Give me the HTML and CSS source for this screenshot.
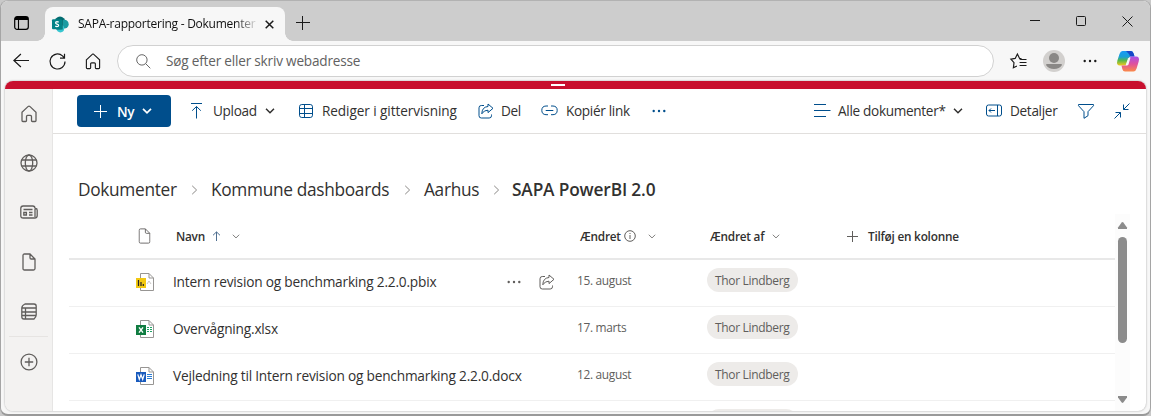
FILE: index.html
```html
<!DOCTYPE html>
<html lang="da">
<head>
<meta charset="utf-8">
<title>SAPA-rapportering - Dokumenter</title>
<link rel="stylesheet" href="styles.css">
</head>
<body>
<svg class="defs" aria-hidden="true">
  <defs>
    <symbol id="home" viewBox="0 0 16 18"><path d="M1 7.2 7.2 1.4Q8 .8 8.8 1.4L15 7.2V15.6Q15 16.5 14.1 16.5H11.3Q10.5 16.5 10.5 15.6V11.5Q10.5 10.4 9.4 10.4H6.6Q5.5 10.4 5.5 11.5V15.6Q5.5 16.5 4.7 16.5H1.9Q1 16.5 1 15.6Z"/></symbol>
    <symbol id="chev" viewBox="0 0 10 6"><path d="M1 .8 5 4.8 9 .8"/></symbol>
    <symbol id="chevr" viewBox="0 0 7 10"><path d="M1.2 .8 5.6 5 1.2 9.2"/></symbol>
    <symbol id="page" viewBox="0 0 14 18"><path d="M2.5 1H8L13 6V15.5Q13 17 11.5 17H2.5Q1 17 1 15.5V2.5Q1 1 2.5 1ZM8 1V4.8Q8 6 9.2 6H13"/></symbol>
    <symbol id="share" viewBox="0 0 16 16"><path d="M6 2.5H3.3Q1 2.5 1 4.8V12.7Q1 15 3.3 15H11.2Q13.5 15 13.5 12.7V11.5"/><path d="M10 1 15 5.3 10 9.6V7.2Q6 7 3.8 10.8 4 4 10 3.5Z"/></symbol>
    <symbol id="dots" viewBox="0 0 14 4"><circle cx="1.7" cy="2" r="1.2"/><circle cx="7" cy="2" r="1.2"/><circle cx="12.3" cy="2" r="1.2"/></symbol>
    <symbol id="sheet" viewBox="0 0 18 18"><path class="sheet" d="M4.5.5H13L17.500 5V17.500H4.500ZM13 .5V5H17.500"/></symbol>
    <linearGradient id="cpA" x1="0" y1="0" x2="0" y2="1"><stop offset="0" stop-color="#1a9af5"/><stop offset=".4" stop-color="#18a0d8"/><stop offset=".65" stop-color="#58b84b"/><stop offset="1" stop-color="#f4c81c"/></linearGradient>
    <linearGradient id="cpB" x1="0" y1="0" x2="0" y2="1"><stop offset="0" stop-color="#a951e8"/><stop offset=".5" stop-color="#e0529c"/><stop offset="1" stop-color="#fb8a48"/></linearGradient>
  </defs>
</svg>
<div class="window">
  <header class="titlebar">
    <svg class="ic tabs-icon" width="15" height="14" viewBox="0 0 15 14"><rect x=".7" y=".7" width="13.600" height="12.600" rx="2.400" stroke-width="1.200"/><path d="M1 2.500H14" stroke-width="3"/><path d="M4.500 3V13" stroke-width="1.100"/></svg>
    <div class="tab">
      <svg width="17" height="17" viewBox="0 0 17 17"><circle cx="8" cy="6" r="5.4" fill="#036c70"/><circle cx="12.3" cy="8.2" r="4.4" fill="#1a9ba1"/><circle cx="8.4" cy="12.6" r="3.8" fill="#37c6d0"/><path d="M4 3.5H10.700V13.500H4Z" fill="#02595c" opacity=".8"/><rect y="3.2" width="10" height="10" rx="1" fill="#038387"/><path d="M6.700 6.300Q6 5.700 5 5.700 3.600 5.800 3.600 6.900 3.700 7.800 5 8.100 6.600 8.500 6.600 9.500 6.500 10.700 5 10.700 4 10.700 3.300 10.100" fill="none" stroke="#fff" stroke-width="1.300"/></svg>
      <span class="tab-title">SAPA-rapportering - Dokumenter</span>
      <svg class="ic" width="9" height="9" viewBox="0 0 9 9"><path d="M.7.7 8.3 8.3M8.3.7.7 8.3" stroke-width="1.5"/></svg>
    </div>
    <svg class="ic newtab" width="14" height="14" viewBox="0 0 14 14"><path d="M6.500 0V14M0 6.500H14" stroke-width="1"/></svg>
    <div class="controls">
      <svg class="ic" width="10" height="10" viewBox="0 0 10 10"><path d="M0 4.5H10" stroke-width="1"/></svg>
      <svg class="ic" width="10" height="10" viewBox="0 0 10 10"><rect x=".5" y=".5" width="9" height="9" rx="1"/></svg>
      <svg class="ic" width="11" height="11" viewBox="0 0 11 11"><path d="M.5.5 10.5 10.5M10.5.5.5 10.5"/></svg>
    </div>
  </header>
  <nav class="toolbar">
    <svg class="ic back" width="17" height="16" viewBox="0 0 17 16"><path d="M7.900 1 .9 7.500 7.900 14M1 7.500H16" stroke-width="1.200"/></svg>
    <svg class="ic reload" width="17" height="17" viewBox="0 0 17 17"><path d="M16 8.5A7.5 7.5 0 1 1 13.500 2.900L15.500 5M15.500 .7V5.200H11" stroke-width="1.200"/></svg>
    <svg class="ic" width="16" height="17"><use href="#home" stroke-width="1.200"/></svg>
    <div class="address">
      <svg class="ic search" width="15" height="15" viewBox="0 0 15 15"><circle cx="5.900" cy="5.900" r="5.200"/><path d="M9.600 9.600 14.300 14.300"/></svg>
      <span class="address-text">Søg efter eller skriv webadresse</span>
    </div>
    <svg class="ic fav" width="17" height="17" viewBox="0 0 17 17"><path d="M11.500 5.700 9.600 5.400 7.400 1 5.200 5.400.9 6.200 4 9.700 3.400 14.700 6.900 13M9.600 6.500H16.500M9.600 9.500H16.500M9.600 12.500H16.500" stroke-width="1.200"/></svg>
    <svg class="avatar" width="22" height="22" viewBox="0 0 22 22"><circle cx="11" cy="11" r="11" fill="#d2d0ce"/><circle cx="11" cy="8" r="5" fill="#8a8886"/><path d="M3 15Q3 14 4 14H18Q19 14 19 15A9 7.500 0 0 1 3 15Z" fill="#8a8886"/></svg>
    <svg class="more" width="14" height="4"><use href="#dots"/></svg>
    <svg class="copilot" width="22" height="21" viewBox="0 0 22 21"><path d="M5.500 0H14Q16 0 16.800 3L17.500 5.500H14Q12 5.500 11.200 8L9 14.500H3Q-1 14.500.4 9.500L2.500 3Q3.500 0 5.500 0Z" fill="url(#cpA)"/><path d="M9 0H14Q16 0 16.800 3L17.500 5.500H14.500Q12.500 5.500 12 3Z" fill="#1747c8"/><path d="M16.500 20.500H8Q6 20.500 5.300 18L4.500 14.500H8Q10 14.500 10.800 12L13 5.500H19Q23 5.500 21.700 10.500L19.600 17.500Q18.700 20.500 16.500 20.500Z" fill="url(#cpB)"/><path d="M13.500 6.500 11.500 13.500Q11 14.500 9.700 14.500H8.500L11 7.500Q11.500 6.500 13.500 6.500Z" fill="#f7f7f7"/></svg>
  </nav>
  <div class="content">
    <div class="redbar"><span class="grip"></span></div>
    <div class="app">
      <aside class="rail">
        <svg class="ric" width="16" height="18"><use href="#home"/></svg>
        <svg class="ric" width="18" height="18" viewBox="0 0 18 18"><circle cx="9" cy="9" r="8"/><ellipse cx="9" cy="9" rx="3.700" ry="8"/><path d="M1.700 6H16.300M1.700 12H16.300"/></svg>
        <svg class="ric" width="18" height="14" viewBox="0 0 18 14"><path d="M15 3.500V12M15 3.500H15.500Q17.200 3.500 17.200 5.200V10.500Q17.200 13 14.800 13H3.200Q.8 13 .8 10.700V3.300Q.8 1 3.100 1H12.700Q15 1 15 3.300M3.500 4.500H12.500M9 7.500H12.500M9 10H12.500M3.800 7.500H6.400V10H3.800Z"/></svg>
        <svg class="ric" width="14" height="18"><use href="#page"/></svg>
        <svg class="ric" width="16" height="17" viewBox="0 0 16 17"><path d="M4 1H13Q15.200 1 15.200 3.200V12Q15.200 14 13 16H3Q.8 16 .8 13.800V5Q.8 2.500 4 1ZM.8 5H15M.8 9H15M.8 12.500H15M4.500 5V16"/></svg>
        <span class="rail-line"></span>
        <svg class="ric" width="18" height="18" viewBox="0 0 18 18"><circle cx="9" cy="9" r="7.900"/><path d="M9 4.800V13.200M4.800 9H13.200"/></svg>
      </aside>
      <main class="main">
        <div class="commands">
          <div class="new"><svg width="13" height="13" viewBox="0 0 13 13"><path d="M6.500 0V13M0 6.500H13"/></svg><b class="new-label">Ny</b><svg class="bold" width="10" height="6"><use href="#chev"/></svg></div>
          <svg class="cic" width="16" height="16" viewBox="0 0 16 16"><path d="M3 .5H14M8.500 15.500V3.500M4.200 7.700 8.500 3.500 12.800 7.700"/></svg>
          <span>Upload</span>
          <svg class="cic dark" width="10" height="6"><use href="#chev"/></svg>
          <svg class="cic" width="16" height="16" viewBox="0 0 16 16"><rect x="1.500" y="1.500" width="13" height="13" rx="2.300"/><path d="M1.500 5.500H14.500M1.500 10.500H14.500M6.500 1.500V14.500"/></svg>
          <span class="t-edit">Rediger i gittervisning</span>
          <svg class="cic" width="16" height="16"><use href="#share"/></svg>
          <span>Del</span>
          <svg class="cic" width="17" height="11" viewBox="0 0 17 11"><path d="M7 1H5Q.8 1.200.8 5.300.8 9.500 5 9.700H7M10 1H12Q16.200 1.200 16.200 5.300 16.200 9.500 12 9.700H10M4.700 5.500H12.300"/></svg>
          <span>Kopiér link</span>
          <svg class="blue-fill" width="14" height="4"><use href="#dots"/></svg>
          <svg class="cic" width="17" height="14" viewBox="0 0 17 14"><path d="M0 .5H12M0 6.500H16.500M0 12.500H12"/></svg>
          <span class="t-view">Alle dokumenter*</span>
          <svg class="cic dark" width="10" height="6"><use href="#chev"/></svg>
          <svg class="cic" width="17" height="13" viewBox="0 0 17 13"><rect x=".5" y="1" width="15" height="11" rx="2"/><path d="M11.500 1V12M9 6.500H3M5 4.500 3 6.500 5 8.500"/></svg>
          <span>Detaljer</span>
          <svg class="cic" width="16" height="16" viewBox="0 0 16 16"><path d="M.5 1.500H15.500V2.700L10 8.700V12.700L6 15.300V8.700L.5 2.700Z"/></svg>
          <svg class="cic" width="16" height="16" viewBox="0 0 16 16"><path d="M15.500.5 9.500 6.500M9.500 1.500V6.500H14.500M.5 15.500 6.500 9.500M1.500 9.500H6.500V14.500"/></svg>
        </div>
        <div class="crumbs">
          <span>Dokumenter</span><svg width="7" height="10"><use href="#chevr"/></svg>
          <span>Kommune dashboards</span><svg width="7" height="10"><use href="#chevr"/></svg>
          <span>Aarhus</span><svg width="7" height="10"><use href="#chevr"/></svg>
          <span class="current">SAPA PowerBI 2.0</span>
        </div>
        <div class="listing">
          <div class="table">
            <div class="thead">
              <svg class="gic" width="13" height="16" viewBox="0 0 14 18"><use href="#page"/></svg>
              <span>Navn</span>
              <svg class="sort" width="9" height="10" viewBox="0 0 9 10"><path d="M4.500 10V1M1 4.300 4.500.9 8 4.300"/></svg>
              <svg class="gic" width="8" height="5"><use href="#chev"/></svg>
              <span>Ændret</span>
              <svg class="gic" width="12" height="12" viewBox="0 0 12 12"><circle cx="6" cy="6" r="5.300"/><path d="M6 5V9M6 3V4"/></svg>
              <svg class="gic" width="8" height="5"><use href="#chev"/></svg>
              <span>Ændret af</span>
              <svg class="gic" width="8" height="5"><use href="#chev"/></svg>
              <svg class="gic" width="11" height="11" viewBox="0 0 11 11"><path d="M5.500 0V11M0 5.500H11"/></svg>
              <span>Tilføj en kolonne</span>
            </div>
            <div class="row">
              <svg width="18" height="18" viewBox="0 0 18 18"><use href="#sheet"/><path d="M11 11 13 8 15 11" fill="none" stroke="#c8c6c4"/><rect y="5" width="10" height="10" fill="#f2c811"/><path d="M2.500 7V13M5 9V13M7.300 11V13" stroke="#252423" stroke-width="1.200"/></svg>
              <span class="name">Intern revision og benchmarking 2.2.0.pbix</span>
              <svg class="grey-fill" width="14" height="4"><use href="#dots"/></svg>
              <svg class="gic" width="16" height="16"><use href="#share"/></svg>
              <span class="date">15. august</span><span class="pill">Thor Lindberg</span>
            </div>
            <div class="row">
              <svg width="18" height="18" viewBox="0 0 18 18"><use href="#sheet"/><path d="M11 7.500H13M14 7.500H16M11 9.500H13M14 9.500H16M11 11.500H13M14 11.500H16" stroke="#21a366"/><rect y="5" width="10" height="10" fill="#107c41"/><path d="M3 7.300 7 12.700M7 7.300 3 12.700" stroke="#fff" stroke-width="1.400"/></svg>
              <span class="name">Overvågning.xlsx</span><span></span><span></span>
              <span class="date">17. marts</span><span class="pill">Thor Lindberg</span>
            </div>
            <div class="row">
              <svg width="18" height="18" viewBox="0 0 18 18"><use href="#sheet"/><path d="M11 7.500H16M11 9.500H16M11 11.500H16" stroke="#2b7cd3"/><rect y="5" width="10" height="10" fill="#185abd"/><path d="M1.800 7.300 3.300 12.300 5 7.800 6.700 12.300 8.200 7.300" fill="none" stroke="#fff" stroke-width="1.200"/></svg>
              <span class="name">Vejledning til Intern revision og benchmarking 2.2.0.docx</span><span></span><span></span>
              <span class="date">12. august</span><span class="pill">Thor Lindberg</span>
            </div>
            <div class="row"><span></span><span></span><span></span><span></span><span></span><span class="pill"></span></div>
          </div>
          <div class="scroll">
            <svg width="9" height="7" viewBox="0 0 9 7"><path d="M3.700.5Q4.500-.3 5.300.5L9 5.500V7H0V5.500Z"/></svg>
            <span class="thumb"></span>
            <svg class="down" width="9" height="7" viewBox="0 0 9 7"><path d="M3.700 6.500Q4.500 7.300 5.300 6.500L9 1.500V0H0V1.500Z"/></svg>
          </div>
        </div>
      </main>
    </div>
  </div>
</div>
</body>
</html>
```

FILE: styles.css
```css
* { box-sizing: border-box; }
body {
  margin: 0;
  width: 1151px;
  height: 416px;
  overflow: hidden;
  background: #c9c9c9;
  font-family: "Open Sans", "Noto Sans", sans-serif;
  font-size: 13.6px;
  letter-spacing: -0.32px;
  color: #323130;
}
svg { display: block; flex: none; overflow: visible; }
span, b { white-space: nowrap; }
.defs { position: absolute; width: 0; height: 0; }
.window {
  width: 1151px;
  height: 416px;
  border: 1px solid #a5a5a5;
  border-top-color: #b2b2b2;
  border-bottom: 2px solid #999;
  border-radius: 8px;
  background: #f7f7f7;
  overflow: hidden;
}
.titlebar { height: 40px; background: #cdcdcd; display: flex; align-items: center; padding-left: 13px; }
.ic { fill: none; stroke: #1b1b1b; }
.tabs-icon { margin-top: 4px; stroke: #000; }
.tab {
  width: 240px;
  height: 34px;
  margin: 6px 0 0 16px;
  padding: 0 10px 0 7px;
  border-radius: 8px 8px 0 0;
  background: #f7f7f7;
  display: flex;
  align-items: center;
  position: relative;
}
.tab::before, .tab::after {
  content: "";
  position: absolute;
  bottom: 0;
  width: 8px;
  height: 8px;
}
.tab::before { left: -8px; background: radial-gradient(circle at 0 0, #cdcdcd 7.5px, #f7f7f7 8px); }
.tab::after { right: -8px; background: radial-gradient(circle at 100% 0, #cdcdcd 7.5px, #f7f7f7 8px); }
.tab-title {
  width: 179px;
  margin: 0 8px 2px 9px;
  overflow: hidden;
  font-size: 12px;
  letter-spacing: -0.25px;
  color: #111;
  -webkit-mask-image: linear-gradient(90deg, #000 88%, transparent 101%);
  mask-image: linear-gradient(90deg, #000 88%, transparent 101%);
}
.newtab { margin: 4px 0 0 11px; }
.controls { margin: 0 17px 0 auto; display: flex; align-items: center; gap: 36px; }
.toolbar { height: 40px; display: flex; align-items: center; padding-left: 12px; }
.reload { margin: 0 19px; }
.address {
  width: 877px;
  height: 32px;
  margin: 0 16px 0 16px;
  padding-left: 18px;
  border: 1px solid #d1d1d1;
  border-radius: 16px;
  background: #fff;
  display: flex;
  align-items: center;
  gap: 15px;
}
.search { stroke: #666; }
.address-text { color: #616161; font-size: 13.600px; letter-spacing: -0.2px; margin-bottom: 1px; }
.avatar { margin: 0 18px 0 16px; }
.copilot { margin-left: 20px; }
.content {
  width: 1141px;
  height: 330px;
  margin-left: 4px;
  border-radius: 8px;
  background: #fff;
  overflow: hidden;
  box-shadow: 0 0 2px #999;
}
.redbar { height: 8px; background: #c8102e; display: flex; justify-content: center; align-items: center; }
.grip { width: 14px; height: 2px; margin-right: 35px; background: #fff; }
.app { height: 322px; display: flex; }
.rail {
  width: 48px;
  border-right: 1px solid #e6e5e4;
  background: #f3f2f1;
  display: grid;
  grid-template-rows: 48px 50px 48px 51px 49px 1px 49px;
  justify-items: center;
  align-items: center;
  padding-top: 1px;
}
.ric { fill: none; stroke: #605e5c; stroke-width: 1.300; }
.rail-line { width: 39px; height: 1px; background: #e6e4e2; }
.main { flex: 1; min-width: 0; }
.commands {
  height: 45px;
  padding: 0 0 1px 24px;
  border-bottom: 1px solid #e1dfdd;
  display: grid;
  grid-template-columns: 111px 25px 52px 33px 24px 156px 23px 40px 25px 86px 162px 24px 115px 33px 24px 68px 36px 20px;
  align-items: center;
}
.commands > span, .new-label { position: relative; }
.t-edit { letter-spacing: -0.08px; }
.new {
  width: 94px;
  height: 32px;
  margin-top: 1px;
  padding-left: 17px;
  border-radius: 4px;
  background: #004e8c;
  color: #fff;
  display: flex;
  align-items: center;
  fill: none;
  stroke: #fff;
  stroke-width: 1;
}
.new-label { width: 18px; margin: 0 7px 0 10px; font-weight: 600; stroke: none; }
.bold { stroke-width: 1.700; }
.cic { fill: none; stroke: #004e8c; stroke-width: 1; }
.cic.dark { stroke: #323130; stroke-width: 1.500; }
.blue-fill { fill: #004e8c; }
.grey-fill { fill: #605e5c; }
.crumbs {
  height: 80px;
  padding: 31px 0 0 25px;
  display: grid;
  grid-template-columns: 113px 20px 193px 20px 69px 19px 150px;
  align-items: center;
  font-size: 17.300px;
  fill: none;
  stroke: #8a8886;
}
.crumbs span { stroke: none; }
.crumbs .current { font-weight: 600; letter-spacing: -0.150px; }
.listing { display: flex; height: 197px; padding-left: 16px; overflow: hidden; }
.table { width: 1046px; }
.thead {
  height: 46px;
  padding: 0 0 0 69px;
  border-bottom: 2px solid #e8e8e8;
  display: grid;
  grid-template-columns: 38px 36px 20px 348px 44px 24px 62px 62px 75px 21px 100px;
  align-items: center;
  font-size: 11.800px;
  letter-spacing: -0.230px;
  font-weight: 600;
}
.gic { fill: none; stroke: #605e5c; }
.sort { fill: none; stroke: #4f6f90; }
.row {
  height: 47px;
  padding: 0 0 2px 67px;
  border-bottom: 1px solid #f0f0f0;
  display: grid;
  grid-template-columns: 37px 334px 32px 38px 130px 91px;
  align-items: center;
}
.name { font-size: 13.700px; letter-spacing: -0.21px; margin-bottom: 1px; }
.date { color: #605e5c; font-size: 11.900px; margin-bottom: 4px; }
.pill {
  height: 24px;
  margin-bottom: 4px;
  padding-left: 8px;
  border-radius: 12px;
  background: #edebe9;
  color: #605e5c;
  font-size: 12px;
  line-height: 26px;
}
.scroll { width: 15px; background: #fcfcfc; fill: #8b8b8b; display: flex; flex-direction: column; align-items: center; padding: 8px 0; }
.thumb { width: 9px; height: 106px; margin-top: 8px; border-radius: 5px; background: #8b8b8b; }
.down { margin-top: auto; }
.more { fill: #1b1b1b; }
.sheet { fill: #fff; stroke: #979593; stroke-width: 1; }
```
